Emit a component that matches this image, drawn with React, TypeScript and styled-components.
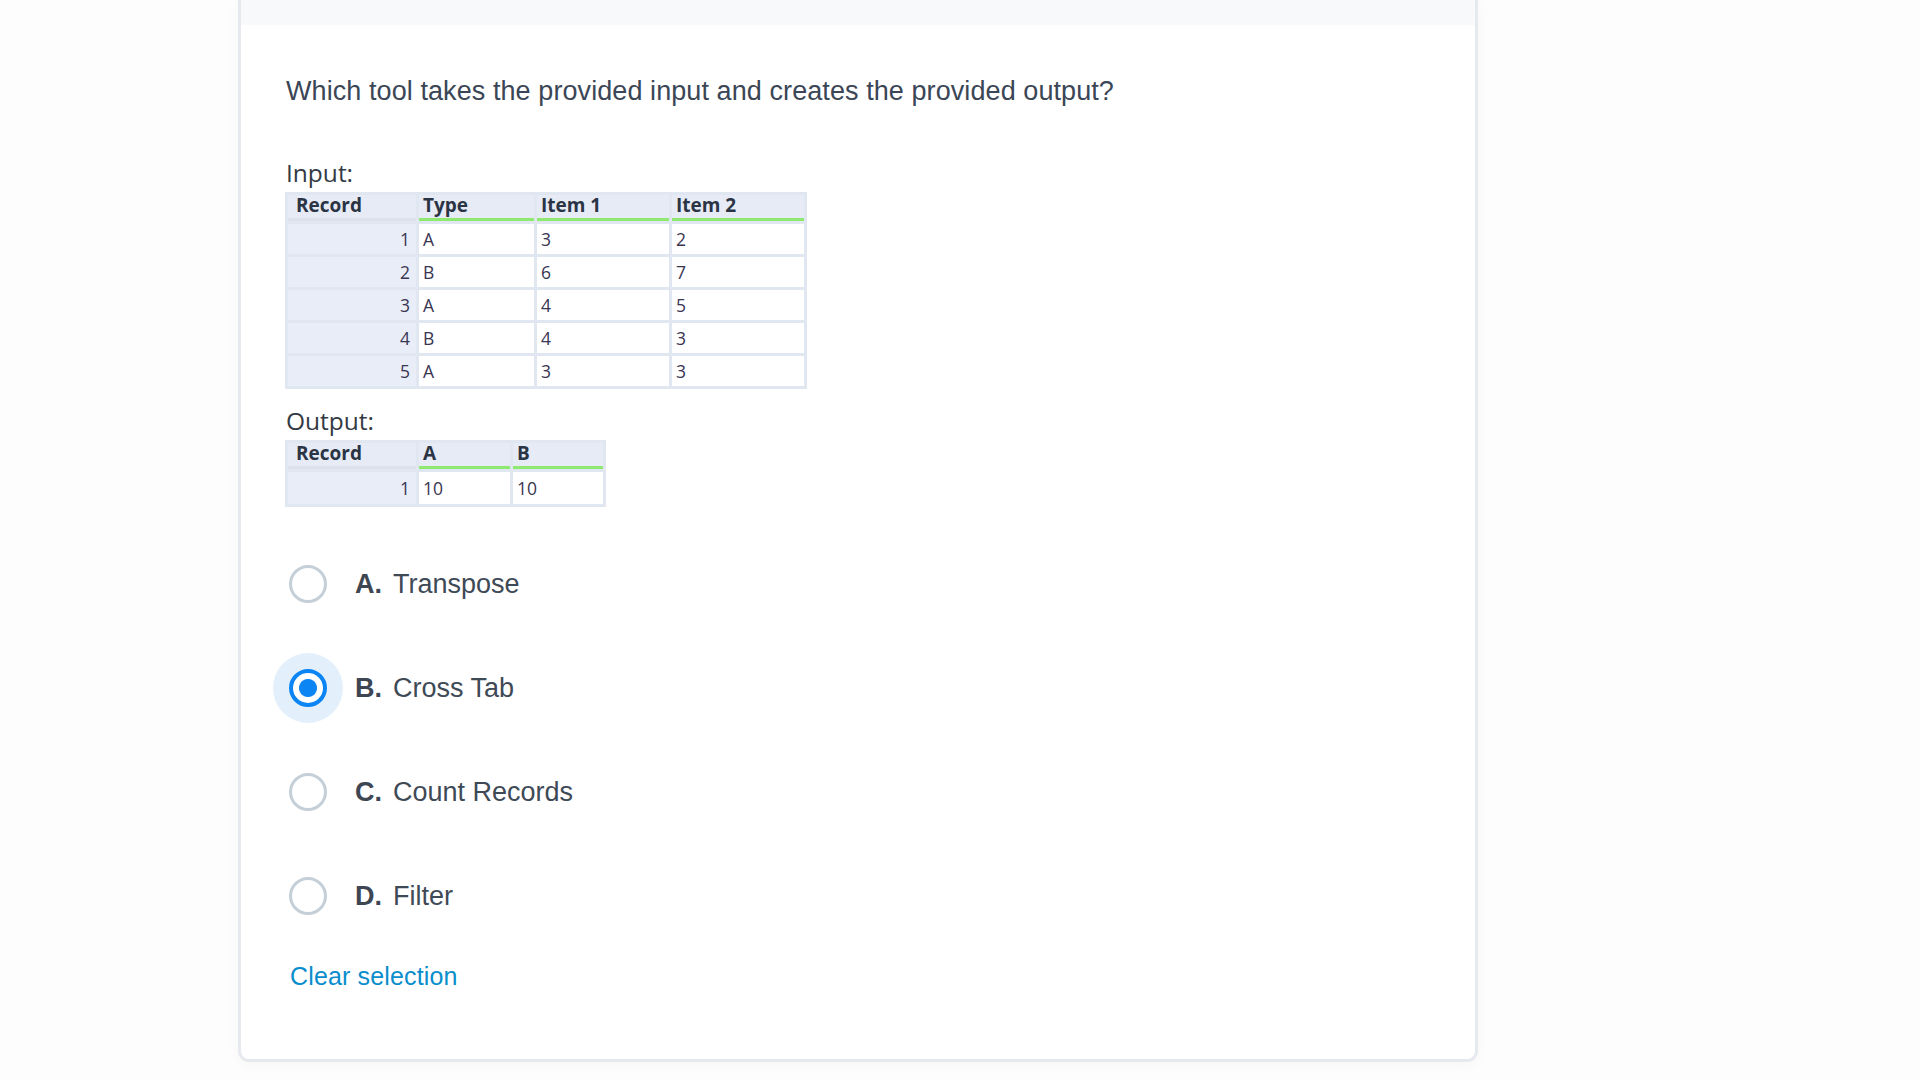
import React from 'react';
import styled, { createGlobalStyle } from 'styled-components';

const GlobalStyle = createGlobalStyle`
  html, body {
    margin: 0;
    padding: 0;
    background: #fdfdfd;
  }
  * {
    box-sizing: border-box;
  }
`;

interface IOption {
  letter: string;
  text: string;
}

const options: IOption[] = [
  { letter: 'A.', text: 'Transpose' },
  { letter: 'B.', text: 'Cross Tab' },
  { letter: 'C.', text: 'Count Records' },
  { letter: 'D.', text: 'Filter' },
];

const inputRows = [
  ['1', 'A', '3', '2'],
  ['2', 'B', '6', '7'],
  ['3', 'A', '4', '5'],
  ['4', 'B', '4', '3'],
  ['5', 'A', '3', '3'],
];

/** 데이터 표 (Record 열 + 값 열) */
const DataTable: React.FC<{ headers: string[]; widths: number[]; rows: string[][]; rowHeight?: number }> = ({
  headers,
  widths,
  rows,
  rowHeight = 30,
}) => (
  <Grid>
    <colgroup>
      {widths.map((w, i) => (
        <col key={i} style={{ width: w }} />
      ))}
    </colgroup>
    <thead>
      <tr>
        {headers.map((h, i) => (
          <HeadCell key={h} field={i > 0}>
            {h}
          </HeadCell>
        ))}
      </tr>
    </thead>
    <tbody>
      {rows.map(row => (
        <tr key={row[0]}>
          {row.map((v, i) =>
            i === 0 ? (
              <RecordCell key={i} h={rowHeight}>
                {v}
              </RecordCell>
            ) : (
              <ValueCell key={i} h={rowHeight}>
                {v}
              </ValueCell>
            ),
          )}
        </tr>
      ))}
    </tbody>
  </Grid>
);

const App: React.FC = () => {
  const selected = 1;
  return (
    <Page>
      <GlobalStyle />
      <Card>
        <TopStrip />
        <Body>
          <Question>Which tool takes the provided input and creates the provided output?</Question>
          <SampleLabel>Input:</SampleLabel>
          <DataTable
            headers={['Record', 'Type', 'Item 1', 'Item 2']}
            widths={[128, 115, 132, 132]}
            rows={inputRows}
          />
          <SampleLabel spaced>Output:</SampleLabel>
          <DataTable
            headers={['Record', 'A', 'B']}
            widths={[128, 91, 90]}
            rows={[['1', '10', '10']]}
            rowHeight={32}
          />
          <OptionList>
            {options.map((o, i) => (
              <OptionRow key={o.letter}>
                <RadioBox>
                  <Radio checked={i === selected} />
                </RadioBox>
                <Letter>{o.letter}</Letter>
                <span>{o.text}</span>
              </OptionRow>
            ))}
          </OptionList>
          <ClearLink>Clear selection</ClearLink>
        </Body>
      </Card>
    </Page>
  );
};

const Page = styled.div`
  min-height: 1080px;
  padding-left: 238px;
`;
const Card = styled.div`
  width: 1240px;
  background: #fff;
  border: 3px solid #e6e9ed;
  border-top: none;
  border-radius: 0 0 11px 11px;
  box-shadow: 0 3px 14px rgba(0, 0, 0, 0.03);
  overflow: hidden;
`;
const TopStrip = styled.div`
  height: 25px;
  background: #f8f9fb;
`;
const Body = styled.div`
  padding: 46px 45px 66px;
`;
const Question = styled.div`
  font-family: 'Liberation Sans', Arial, sans-serif;
  font-size: 27px;
  line-height: 40px;
  letter-spacing: 0.08px;
  color: #3b4656;
  margin-bottom: 45px;
`;
const SampleLabel = styled.div<{ spaced?: boolean }>`
  font-family: 'Open Sans', sans-serif;
  font-size: 24.5px;
  line-height: 34px;
  color: #333a44;
  margin-top: ${p => (p.spaced ? '15px' : '0')};
  margin-bottom: 2px;
`;
const Grid = styled.table`
  border-collapse: separate;
  border-spacing: 3px;
  background: #e1e7f1;
  table-layout: fixed;
  font-family: 'Open Sans', sans-serif;
  margin-left: -1px;
`;
const HeadCell = styled.th<{ field: boolean }>`
  height: 24px;
  padding: 0 0 3px ${p => (p.field ? '4px' : '8px')};
  text-align: left;
  font-size: 19px;
  font-weight: 700;
  line-height: 20px;
  color: #2a3444;
  background: #e6ebf5;
  border-bottom: 3px solid ${p => (p.field ? '#8eea6e' : '#dbe2ee')};
  vertical-align: middle;
`;
const RecordCell = styled.td<{ h: number }>`
  height: ${p => p.h}px;
  padding: 0 6px;
  text-align: right;
  font-size: 17.5px;
  color: #3a3552;
  background: #e8edf7;
  vertical-align: middle;
`;
const ValueCell = styled.td<{ h: number }>`
  height: ${p => p.h}px;
  padding: 0 4px;
  text-align: left;
  font-size: 17.5px;
  color: #3a3552;
  background: #fff;
  vertical-align: middle;
`;
const OptionList = styled.div`
  margin-top: 25px;
  display: flex;
  flex-direction: column;
`;
const OptionRow = styled.div`
  height: 104px;
  display: flex;
  align-items: center;
  font-family: 'Liberation Sans', Arial, sans-serif;
  font-size: 27px;
  color: #3f4a57;
`;
const RadioBox = styled.span`
  width: 44px;
  display: flex;
  justify-content: center;
  margin-right: 25px;
`;
const Radio = styled.span<{ checked: boolean }>`
  width: 38px;
  height: 38px;
  border-radius: 50%;
  border: ${p => (p.checked ? '4px solid #0b85f4' : '3px solid #c5cfd8')};
  background: ${p => (p.checked ? 'radial-gradient(circle, #0b85f4 0 8.5px, #fff 9.5px)' : '#fff')};
  box-shadow: ${p => (p.checked ? '0 0 0 16px #e3f0fc' : 'none')};
`;
const Letter = styled.span`
  font-weight: 700;
  color: #3d4652;
  margin-right: 11px;
`;
const ClearLink = styled.a`
  display: inline-block;
  margin-top: 11px;
  margin-left: 4px;
  font-family: 'Liberation Sans', Arial, sans-serif;
  font-size: 25px;
  line-height: 34px;
  letter-spacing: 0.15px;
  color: #0a8dcc;
  cursor: pointer;
`;

export default App;
